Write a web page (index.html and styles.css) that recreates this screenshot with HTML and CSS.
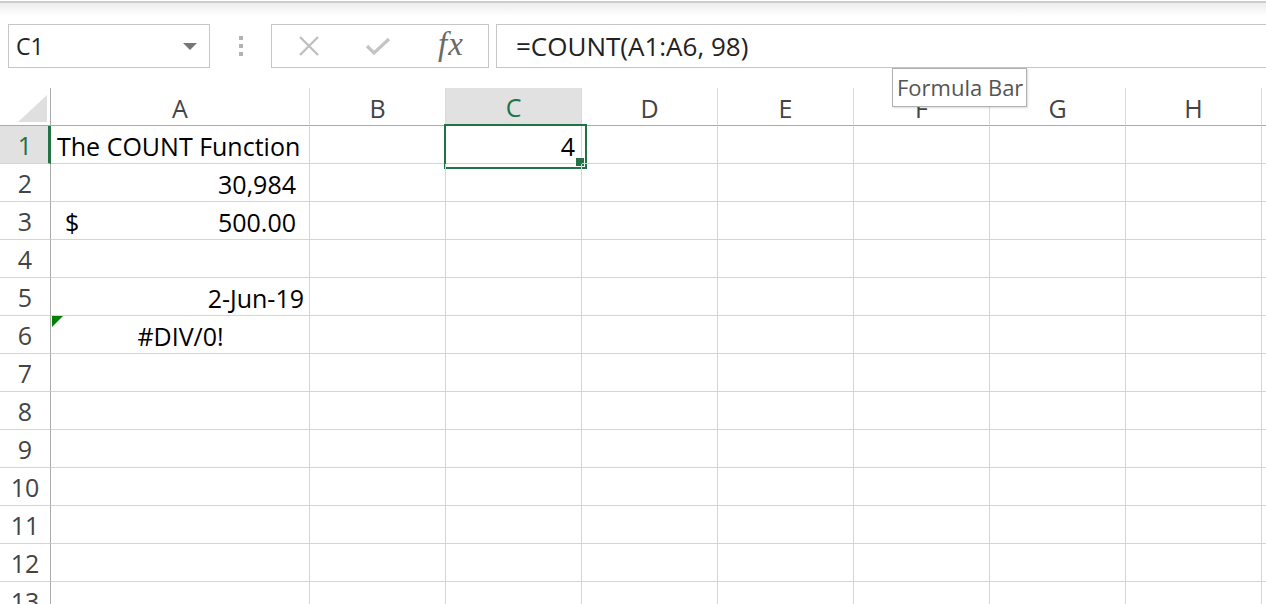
FILE: index.html
```html
<html>
<head>
    <meta charset="UTF-8">
    <title>COUNT</title>
    <link rel="stylesheet" href="styles.css">
</head>
<body>
    <div class="topbar"></div>

    <div class="toolbar">
        <div class="name-box">
            <span>C1</span>
            <span class="caret"></span>
        </div>
        <div class="grip"><i></i><i></i><i></i></div>
        <div class="fx-buttons">
            <svg class="btn" width="24" height="20" viewBox="0 0 24 20"><path d="M3 1 L21 19 M21 1 L3 19" stroke="#bdbdbd" stroke-width="2.2" fill="none"/></svg>
            <svg class="btn" width="26" height="20" viewBox="0 0 26 20"><path d="M2 10 L9 17 L24 3" stroke="#c4c4c4" stroke-width="3.2" fill="none"/></svg>
            <span class="fx">fx</span>
        </div>
        <div class="formula">=COUNT(A1:A6, 98)</div>
    </div>

    <div class="tooltip">Formula Bar</div>

    <div class="sheet">
        <div class="corner"><span class="corner-tri"></span></div>
        <div class="col-head">A</div>
        <div class="col-head">B</div>
        <div class="col-head active">C</div>
        <div class="col-head">D</div>
        <div class="col-head">E</div>
        <div class="col-head">F</div>
        <div class="col-head">G</div>
        <div class="col-head">H</div>
        <div class="col-head"></div>

        <div class="row-head active">1</div>
        <div class="cell">The COUNT Function</div>
        <div class="cell"></div>
        <div class="cell right sel">4</div>
        <div class="cell"></div><div class="cell"></div><div class="cell"></div><div class="cell"></div><div class="cell"></div><div class="cell"></div>

        <div class="row-head">2</div>
        <div class="cell right acct">30,984</div>
        <div class="cell"></div><div class="cell"></div><div class="cell"></div><div class="cell"></div><div class="cell"></div><div class="cell"></div><div class="cell"></div><div class="cell"></div>

        <div class="row-head">3</div>
        <div class="cell money"><span class="cur">$</span><span>500.00</span></div>
        <div class="cell"></div><div class="cell"></div><div class="cell"></div><div class="cell"></div><div class="cell"></div><div class="cell"></div><div class="cell"></div><div class="cell"></div>

        <div class="row-head">4</div>
        <div class="cell"></div><div class="cell"></div><div class="cell"></div><div class="cell"></div><div class="cell"></div><div class="cell"></div><div class="cell"></div><div class="cell"></div><div class="cell"></div>

        <div class="row-head">5</div>
        <div class="cell right">2-Jun-19</div>
        <div class="cell"></div><div class="cell"></div><div class="cell"></div><div class="cell"></div><div class="cell"></div><div class="cell"></div><div class="cell"></div><div class="cell"></div>

        <div class="row-head">6</div>
        <div class="cell center err"><span class="flag"></span>#DIV/0!</div>
        <div class="cell"></div><div class="cell"></div><div class="cell"></div><div class="cell"></div><div class="cell"></div><div class="cell"></div><div class="cell"></div><div class="cell"></div>

        <div class="row-head">7</div>
        <div class="cell"></div><div class="cell"></div><div class="cell"></div><div class="cell"></div><div class="cell"></div><div class="cell"></div><div class="cell"></div><div class="cell"></div><div class="cell"></div>
        <div class="row-head">8</div>
        <div class="cell"></div><div class="cell"></div><div class="cell"></div><div class="cell"></div><div class="cell"></div><div class="cell"></div><div class="cell"></div><div class="cell"></div><div class="cell"></div>
        <div class="row-head">9</div>
        <div class="cell"></div><div class="cell"></div><div class="cell"></div><div class="cell"></div><div class="cell"></div><div class="cell"></div><div class="cell"></div><div class="cell"></div><div class="cell"></div>
        <div class="row-head">10</div>
        <div class="cell"></div><div class="cell"></div><div class="cell"></div><div class="cell"></div><div class="cell"></div><div class="cell"></div><div class="cell"></div><div class="cell"></div><div class="cell"></div>
        <div class="row-head">11</div>
        <div class="cell"></div><div class="cell"></div><div class="cell"></div><div class="cell"></div><div class="cell"></div><div class="cell"></div><div class="cell"></div><div class="cell"></div><div class="cell"></div>
        <div class="row-head">12</div>
        <div class="cell"></div><div class="cell"></div><div class="cell"></div><div class="cell"></div><div class="cell"></div><div class="cell"></div><div class="cell"></div><div class="cell"></div><div class="cell"></div>
        <div class="row-head">13</div>
        <div class="cell"></div><div class="cell"></div><div class="cell"></div><div class="cell"></div><div class="cell"></div><div class="cell"></div><div class="cell"></div><div class="cell"></div><div class="cell"></div>
    </div>
</body>
</html>
```
FILE: styles.css
```css
* {
    margin: 0;
    padding: 0;
    box-sizing: border-box;
}

body {
    width: 1266px;
    height: 604px;
    overflow: hidden;
    background: #fff;
    font-family: 'Open Sans', 'Noto Sans', sans-serif;
    color: #000;
    position: relative;
}

.topbar {
    height: 16px;
    background: linear-gradient(to bottom, #fff 0, #fff 1px, #cdcdcd 1px, #cdcdcd 3px, #ececec 3px, #fff 16px);
}

.toolbar {
    display: flex;
    align-items: center;
    height: 44px;
    margin-top: 8px;
    padding-left: 8px;
}

.name-box {
    width: 202px;
    height: 44px;
    border: 1px solid #c6c6c6;
    display: flex;
    align-items: center;
    justify-content: space-between;
    padding: 0 12px 0 7px;
    font-size: 23px;
    color: #222;
}

.caret {
    width: 0;
    height: 0;
    border-left: 7px solid transparent;
    border-right: 7px solid transparent;
    border-top: 7px solid #777;
}

.grip {
    width: 61px;
    display: flex;
    flex-direction: column;
    align-items: center;
    gap: 4px;
}

.grip i {
    display: block;
    width: 4px;
    height: 4px;
    background: #b3b3b3;
}

.fx-buttons {
    width: 218px;
    height: 44px;
    border: 1px solid #c6c6c6;
    display: flex;
    align-items: center;
    padding-left: 25px;
    gap: 44px;
}

.fx {
    font-family: 'Liberation Serif', serif;
    font-style: italic;
    font-size: 33px;
    line-height: 1;
    color: #6a6a6a;
    margin-left: 3px;
    margin-top: -3px;
    letter-spacing: 1px;
}

.formula {
    flex: 1;
    height: 44px;
    margin-left: 7px;
    border: 1px solid #c6c6c6;
    border-right: none;
    display: flex;
    align-items: center;
    padding-left: 19px;
    font-size: 26px;
    color: #222;
}

.tooltip {
    position: absolute;
    left: 892px;
    top: 68px;
    width: 135px;
    height: 39px;
    border: 1px solid #b0b0b0;
    background: #fff;
    box-shadow: 1px 1px 2px rgba(0,0,0,0.15);
    color: #555;
    font-size: 22px;
    padding-left: 4px;
    line-height: 37px;
    z-index: 5;
}

.sheet {
    margin-top: 20px;
    display: grid;
    grid-template-columns: 51px 259px repeat(7, 136px) 1fr;
    grid-auto-rows: 38px;
    font-size: 25px;
}

.corner {
    border-right: 1px solid #ababab;
    border-bottom: 1px solid #ababab;
    position: relative;
}

.corner-tri {
    position: absolute;
    right: 3px;
    bottom: 3px;
    width: 0;
    height: 0;
    border-left: 29px solid transparent;
    border-bottom: 27px solid #dfdfdf;
}

.col-head {
    border-right: 1px solid #dadada;
    border-bottom: 1px solid #ababab;
    display: flex;
    align-items: center;
    justify-content: center;
    font-size: 25px;
    color: #444;
    padding-top: 2px;
}

.col-head.active {
    background: #e1e1e1;
    color: #217346;
    border-bottom: 2px solid #217346;
}

.row-head {
    border-right: 1px solid #ababab;
    border-bottom: 1px solid #d4d4d4;
    display: flex;
    align-items: center;
    justify-content: center;
    font-size: 25px;
    color: #444;
}

.row-head.active {
    background: #e1e1e1;
    color: #217346;
    border-right: 3px solid #217346;
    padding-left: 2px;
}

.cell {
    border-right: 1px solid #d4d4d4;
    border-bottom: 1px solid #d4d4d4;
    display: flex;
    align-items: flex-end;
    padding: 0 5px 4px 6px;
    line-height: 1;
    white-space: nowrap;
    position: relative;
}

.cell.right {
    justify-content: flex-end;
}

.cell.acct {
    padding-right: 13px;
}

.cell.money {
    justify-content: space-between;
    padding-left: 14px;
    padding-right: 13px;
}

.cell.center {
    justify-content: center;
}

.cell.sel {
    padding-right: 6px;
}

.cell.sel::before {
    content: '';
    position: absolute;
    left: -2px;
    top: -2px;
    width: 139px;
    height: 41px;
    border: 2px solid #217346;
}

.cell.sel::after {
    content: '';
    position: absolute;
    right: -4px;
    bottom: -4px;
    width: 8px;
    height: 8px;
    background: #217346;
    border: 1px solid #fff;
}

.flag {
    position: absolute;
    left: 1px;
    top: 0;
    width: 0;
    height: 0;
    border-top: 11px solid #008000;
    border-right: 11px solid transparent;
}
```
